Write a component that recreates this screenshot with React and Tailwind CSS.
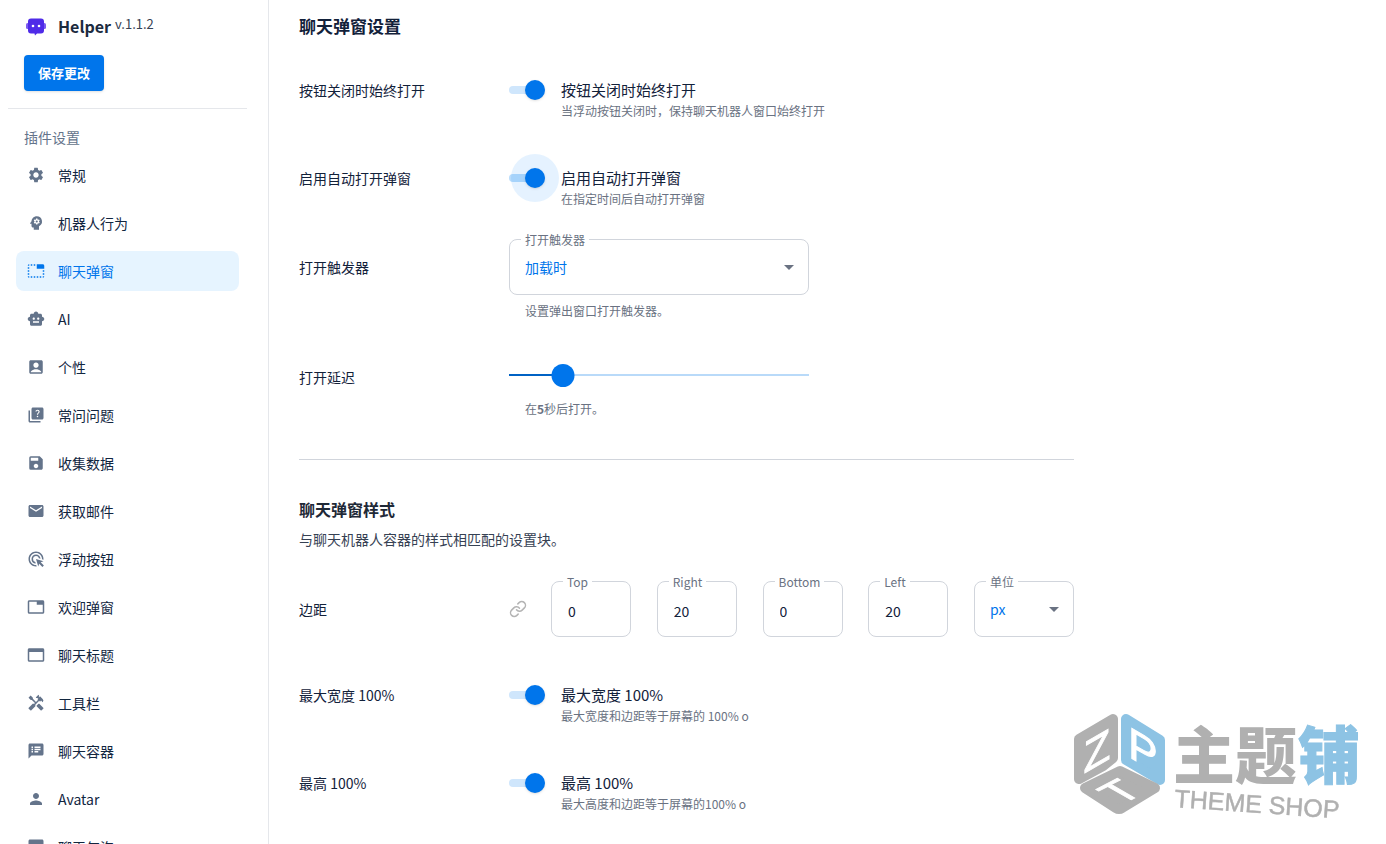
import { useState } from 'react';
import { Link } from 'lucide-react';
import {
  MdSettings,
  MdPsychology,
  MdTabUnselected,
  MdSmartToy,
  MdAccountBox,
  MdQuiz,
  MdSave,
  MdEmail,
  MdAdsClick,
  MdTab,
  MdHandyman,
  MdSpeakerNotes,
  MdPerson,
  MdChatBubble,
  MdArrowDropDown,
} from 'react-icons/md';

const HeaderIcon = ({ size, className }) => (
  <svg width={size} height={size} viewBox="0 0 24 24" fill="currentColor" className={className} aria-hidden="true">
    <path d="M21 3H3c-1.100 0-2 .9-2 2v14c0 1.100.9 2 2 2h18c1.100 0 2-.9 2-2V5c0-1.100-.9-2-2-2zm0 16H3V8h18v11z" />
  </svg>
);

const menu = [
  { label: '常规', icon: MdSettings },
  { label: '机器人行为', icon: MdPsychology },
  { label: '聊天弹窗', icon: MdTabUnselected, active: true },
  { label: 'AI', icon: MdSmartToy },
  { label: '个性', icon: MdAccountBox },
  { label: '常问问题', icon: MdQuiz },
  { label: '收集数据', icon: MdSave },
  { label: '获取邮件', icon: MdEmail },
  { label: '浮动按钮', icon: MdAdsClick },
  { label: '欢迎弹窗', icon: MdTab },
  { label: '聊天标题', icon: HeaderIcon },
  { label: '工具栏', icon: MdHandyman },
  { label: '聊天容器', icon: MdSpeakerNotes },
  { label: 'Avatar', icon: MdPerson },
  { label: '聊天气泡', icon: MdChatBubble },
];

const margins = [
  { label: 'Top', value: '0' },
  { label: 'Right', value: '20' },
  { label: 'Bottom', value: '0' },
  { label: 'Left', value: '20' },
];

const BotLogo = () => (
  <svg width="20" height="18" viewBox="0 0 20 18" aria-hidden="true">
    <rect x="0" y="5" width="3" height="6" rx="1.5" fill="#7c5cf0" />
    <rect x="17" y="5" width="3" height="6" rx="1.5" fill="#7c5cf0" />
    <path
      d="M5 .5h10a3 3 0 0 1 3 3v9a3 3 0 0 1-3 3h-4L9 17.5 8.500 15.500H5a3 3 0 0 1-3-3v-9a3 3 0 0 1 3-3Z"
      fill="#4f2be8"
    />
    <circle cx="7" cy="8" r="1.300" fill="#fff" />
    <circle cx="13" cy="8" r="1.300" fill="#fff" />
  </svg>
);

const Sidebar = () => (
  <aside className="w-[269px] shrink-0 border-r border-gray-200">
    <div className="flex h-[54px] items-center pl-[26px]">
      <BotLogo />
      <span className="ml-3 pb-0.5 text-base leading-6 font-bold text-[#1c2b3f]">Helper</span>
      <span className="ml-1 pb-1.5 text-[13px] leading-5 text-gray-700">v.1.1.2</span>
    </div>
    <div className="mr-[21px] ml-2 border-b border-gray-200 pb-[17px] pl-4">
      <button className="mt-px flex h-9 items-center rounded bg-[#0075eb] px-[14px] text-[13px] font-bold text-white shadow">
        保存更改
      </button>
    </div>
    <h2 className="mt-4 pl-6 text-sm leading-6 text-[#64748b]">插件设置</h2>
    <nav className="mt-1.5 flex flex-col gap-2 pr-[29px] pl-4">
      {menu.map(({ label, icon: Icon, active }) => (
        <a
          key={label}
          href="#"
          className={`flex h-10 items-center gap-[13px] rounded-lg px-[11px] text-sm ${
            active ? 'bg-[#e6f4ff] text-[#0075eb]' : 'text-[#12263f]'
          }`}
        >
          <Icon size={18} className={active ? 'text-[#0075eb]' : 'text-[#64748b]'} />
          {label}
        </a>
      ))}
    </nav>
  </aside>
);

const Row = ({ label, className, labelClass = '', children }) => (
  <div className={`flex items-start ${className}`}>
    <div className={`w-[210px] shrink-0 text-sm leading-6 text-[#12213a] ${labelClass}`}>{label}</div>
    {children}
  </div>
);

const Toggle = ({ title, description, focused }) => {
  const [on, setOn] = useState(true);

  return (
    <label className="flex items-start gap-4">
      <span className="relative mt-0.5 flex h-5 w-9 items-center">
        <input
          type="checkbox"
          role="switch"
          checked={on}
          onChange={() => setOn(!on)}
          className="absolute inset-0 z-20 cursor-pointer opacity-0"
        />
        <span className={`h-2 w-full rounded-full ${focused ? 'bg-[#b9dcfb]' : 'bg-[#cfe6fc]'}`} />
        {focused && <span className="absolute -top-3.5 -right-3.5 size-12 rounded-full bg-[#0086ff]/10" />}
        <span
          className={`absolute top-0 size-5 rounded-full shadow-sm ${on ? 'right-0 bg-[#0075eb]' : 'left-0 bg-gray-300'}`}
        />
      </span>
      <span>
        <span className="block text-[15px] leading-6 text-[#12213a]">{title}</span>
        <span className="block text-xs leading-[18px] text-gray-500">{description}</span>
      </span>
    </label>
  );
};

const Outlined = ({ label, htmlFor, className, children }) => (
  <div className={`relative h-14 rounded-lg border border-gray-300 ${className}`}>
    <label htmlFor={htmlFor} className="absolute -top-2.5 left-[11px] bg-white px-1 text-xs leading-5 text-gray-500">
      {label}
    </label>
    {children}
  </div>
);

const SelectField = ({ id, label, option, className }) => (
  <Outlined label={label} htmlFor={id} className={className}>
    <select id={id} className="h-full w-full appearance-none bg-transparent pl-[15px] text-sm text-[#0075eb] outline-none">
      <option>{option}</option>
    </select>
    <MdArrowDropDown size={24} className="pointer-events-none absolute top-[15px] right-[7px] text-gray-500" />
  </Outlined>
);

const DelaySlider = () => {
  const [delay, setDelay] = useState(5);
  const percent = `${(delay / 28) * 100}%`;

  return (
    <div className="w-[300px]">
      <div className="relative flex h-6 items-center">
        <div className="h-0.5 w-full bg-[#b9daf9]" />
        <div className="absolute left-0 h-0.5 bg-[#0062c4]" style={{ width: percent }} />
        <div className="absolute size-[23px] -translate-x-1/2 rounded-full bg-[#0075eb]" style={{ left: percent }} />
        <input
          type="range"
          min="0"
          max="28"
          value={delay}
          aria-label="打开延迟"
          onChange={(e) => setDelay(Number(e.target.value))}
          className="absolute inset-0 w-full cursor-pointer opacity-0"
        />
      </div>
      <p className="mt-3 pl-4 text-xs leading-5 text-gray-500">
        在<b>{delay}</b>秒后打开。
      </p>
    </div>
  );
};

const Watermark = () => (
  <svg
    className="pointer-events-none fixed right-5 bottom-5 z-30"
    width="294"
    height="114"
    viewBox="0 0 294 114"
    role="img"
  >
    <g strokeLinejoin="round" strokeWidth="10">
      <path d="M7 29 41 9V48L31 56 7 69Z" fill="#b0b0b0" stroke="#b0b0b0" />
      <path d="M54 9 88 30V70L54 50Z" fill="#8dc3e4" stroke="#8dc3e4" />
      <path d="M48 61 83 78 50 98 Q47 100 44 98L13 78Z" fill="#b0b0b0" stroke="#b0b0b0" />
    </g>
    <g
      fill="#fff"
      stroke="#fff"
      strokeWidth="1"
      fontSize="44"
      textAnchor="middle"
      className="font-['Liberation_Sans',sans-serif]"
    >
      <text transform="translate(25 56) skewY(-30)">Z</text>
      <text transform="translate(71 55) skewY(30)">P</text>
      <text transform="matrix(0.870 -0.450 0.870 0.500 61 89)">T</text>
    </g>
    <g fontSize="62" className="font-['Noto_Sans_CJK_SC',sans-serif] font-black">
      <text x="101" y="69" fill="#b0b0b0">
        主题
      </text>
      <text x="226" y="69" fill="#8dc3e4" stroke="#8dc3e4" strokeWidth="1">
        铺
      </text>
    </g>
    <text
      transform="translate(102 97) rotate(4)"
      fontSize="25"
      fill="#b0b0b0"
      stroke="#b0b0b0"
      strokeWidth="0.5"
      className="font-['Liberation_Sans',sans-serif]"
    >
      THEME SHOP
    </text>
  </svg>
);

const App = () => (
  <div className="flex h-screen overflow-hidden bg-white font-['Noto_Sans_CJK_SC',sans-serif]">
    <Sidebar />
    <main className="min-w-0 flex-1 pl-[30px]">
      <div className="max-w-[775px]">
        <h1 className="mt-3.5 text-[17px] leading-6 font-bold text-[#12213a]">聊天弹窗设置</h1>

        <Row label="按钮关闭时始终打开" className="mt-10 h-[88px]">
          <Toggle title="按钮关闭时始终打开" description="当浮动按钮关闭时，保持聊天机器人窗口始终打开" />
        </Row>
        <Row label="启用自动打开弹窗" className="h-[73px]">
          <Toggle title="启用自动打开弹窗" description="在指定时间后自动打开弹窗" focused />
        </Row>
        <Row label="打开触发器" className="h-[124px]" labelClass="pt-4">
          <div>
            <SelectField id="trigger" label="打开触发器" option="加载时" className="w-[300px]" />
            <p className="mt-1.5 pl-4 text-xs leading-5 text-gray-500">设置弹出窗口打开触发器。</p>
          </div>
        </Row>
        <Row label="打开延迟" className="h-24" labelClass="pt-0.5">
          <DelaySlider />
        </Row>

        <hr className="border-gray-300" />

        <h2 className="mt-[37px] text-base leading-6 font-bold text-[#1f2937]">聊天弹窗样式</h2>
        <p className="mt-1.5 text-sm leading-6 text-gray-700">与聊天机器人容器的样式相匹配的设置块。</p>

        <Row label="边距" className="mt-[30px] h-[102px]" labelClass="pt-4">
          <button aria-label="边距" className="mt-[19px] mr-6 text-[#b4b4b4]">
            <Link size={18} />
          </button>
          <div className="flex flex-1 justify-between">
            {margins.map(({ label, value }) => (
              <Outlined key={label} label={label} htmlFor={label} className="w-20">
                <input
                  id={label}
                  defaultValue={value}
                  className="h-full w-full bg-transparent pt-1 pl-4 text-sm text-[#12213a] outline-none"
                />
              </Outlined>
            ))}
            <SelectField id="unit" label="单位" option="px" className="w-[100px]" />
          </div>
        </Row>
        <Row label="最大宽度 100%" className="h-[88px]">
          <Toggle title="最大宽度 100%" description="最大宽度和边距等于屏幕的 100% o" />
        </Row>
        <Row label="最高 100%" className="h-[88px]">
          <Toggle title="最高 100%" description="最大高度和边距等于屏幕的100% o" />
        </Row>
      </div>
    </main>
    <Watermark />
  </div>
);

export default App;
